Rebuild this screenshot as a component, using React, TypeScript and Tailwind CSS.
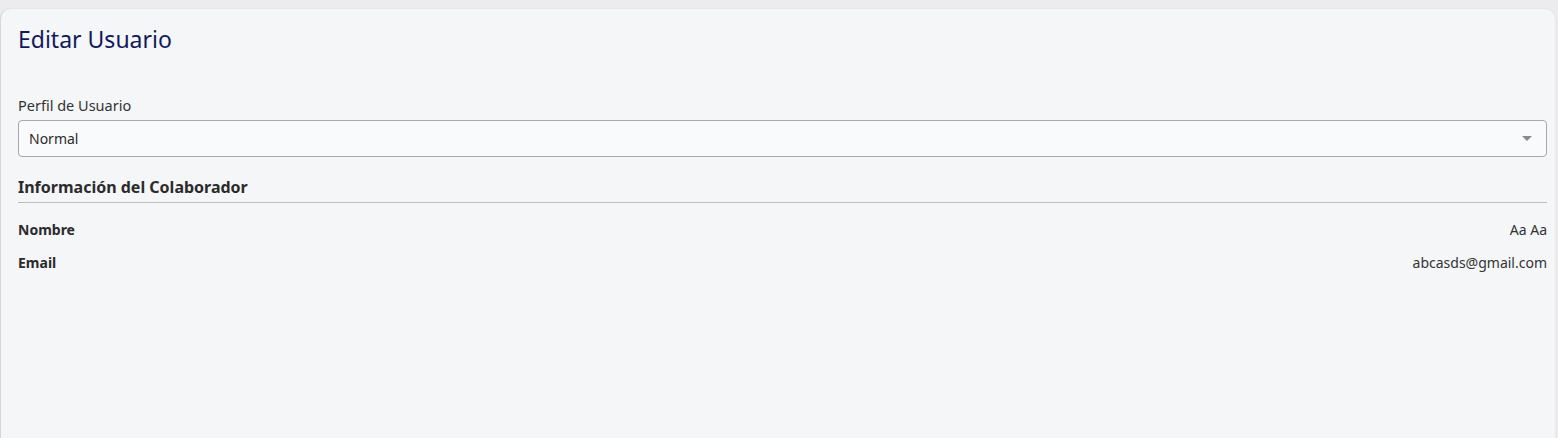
import React from 'react';

function InfoRow({ label, value }: { label: string; value: string }) {
  return (
    <div className="flex items-center justify-between h-[33px]">
      <span className="text-[14px] font-bold text-[#2b2b2b]">{label}</span>
      <span className="text-[14px] text-[#333]">{value}</span>
    </div>
  );
}

export default function App() {
  return (
    <div
      className="w-[1558px] h-[438px] bg-[#ececee] pt-[9px] overflow-hidden"
      style={{ fontFamily: '"Noto Sans", Lato, sans-serif' }}
    >
      <div className="h-full ml-0 mr-[3px] bg-[#f5f6f8] rounded-t-[10px] border-l border-[#d6d6d8] shadow-[0_0_2px_rgba(0,0,0,0.08)] pl-[17px] pr-[8px] pt-[15px]">
        <h1 className="text-[23px] leading-[30px] text-[#121a5c]">Editar Usuario</h1>

        <div className="mt-[42px]">
          <label className="block text-[14.5px] leading-[18px] text-[#333]">Perfil de Usuario</label>
          <div className="mt-[6px] h-[37px] flex items-center justify-between rounded-[4px] border border-[#a9a9ad] bg-[#f9fafb] pl-[10px] pr-[14px]">
            <span className="text-[14px] text-[#2b2b2b]">Normal</span>
            <svg width="10" height="6" viewBox="0 0 10 6">
              <path d="M0 0 L10 0 L5 5 Z" fill="#8a8a8a" />
            </svg>
          </div>
        </div>

        <div className="mt-[19px]">
          <h2 className="text-[16px] leading-[22px] font-bold text-[#2b2b2b]">Información del Colaborador</h2>
          <div className="mt-[4px] h-px bg-[#bdbdc0]" />
        </div>

        <div className="mt-[10px]">
          <InfoRow label="Nombre" value="Aa Aa" />
          <InfoRow label="Email" value="abcasds@gmail.com" />
        </div>
      </div>
    </div>
  );
}
